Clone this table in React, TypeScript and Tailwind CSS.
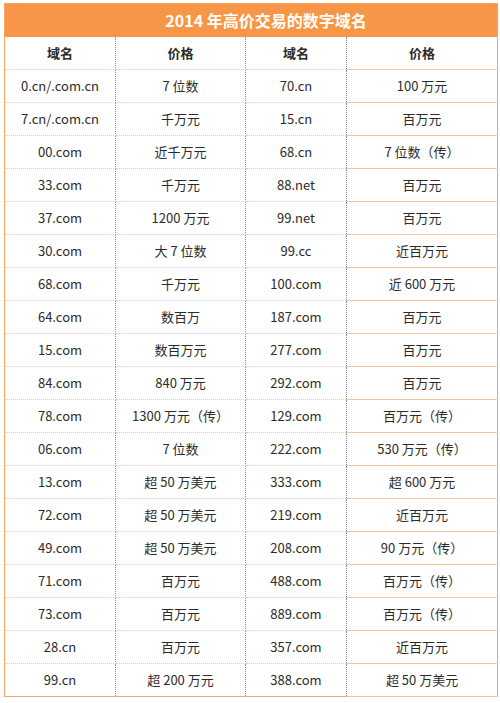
const rows: [string, string, string, string][] = [
  ["0.cn/.com.cn", "7 位数", "70.cn", "100 万元"],
  ["7.cn/.com.cn", "千万元", "15.cn", "百万元"],
  ["00.com", "近千万元", "68.cn", "7 位数（传）"],
  ["33.com", "千万元", "88.net", "百万元"],
  ["37.com", "1200 万元", "99.net", "百万元"],
  ["30.com", "大 7 位数", "99.cc", "近百万元"],
  ["68.com", "千万元", "100.com", "近 600 万元"],
  ["64.com", "数百万", "187.com", "百万元"],
  ["15.com", "数百万元", "277.com", "百万元"],
  ["84.com", "840 万元", "292.com", "百万元"],
  ["78.com", "1300 万元（传）", "129.com", "百万元（传）"],
  ["06.com", "7 位数", "222.com", "530 万元（传）"],
  ["13.com", "超 50 万美元", "333.com", "超 600 万元"],
  ["72.com", "超 50 万美元", "219.com", "近百万元"],
  ["49.com", "超 50 万美元", "208.com", "90 万元（传）"],
  ["71.com", "百万元", "488.com", "百万元（传）"],
  ["73.com", "百万元", "889.com", "百万元（传）"],
  ["28.cn", "百万元", "357.com", "近百万元"],
  ["99.cn", "超 200 万元", "388.com", "超 50 万美元"],
];

const cell = "h-[33px] p-0 text-center align-middle border-b border-[#f9c49b]";
const dotted = "border-r border-r-[#8a8a8a] border-dotted";

export default function App() {
  return (
    <div className="w-[500px] h-[703px] bg-white pt-[3px] pl-[4px] font-['Noto_Sans_CJK_SC','Noto_Sans',sans-serif] text-[13px] text-[#2b2b2b]">
      <table className="w-[493px] border-collapse border border-[#f7a464] table-fixed">
        <colgroup>
          <col className="w-[111px]" />
          <col className="w-[130px]" />
          <col className="w-[101px]" />
          <col className="w-[151px]" />
        </colgroup>
        <thead>
          <tr>
            <th colSpan={4} className="h-[33px] p-0 pl-[30px] bg-[#f79646] text-white text-[16px] font-bold text-center">
              2014 年高价交易的数字域名
            </th>
          </tr>
          <tr className="font-bold">
            <th className={`${cell} ${dotted} font-bold`}>域名</th>
            <th className={`${cell} ${dotted} font-bold`}>价格</th>
            <th className={`${cell} ${dotted} font-bold`}>域名</th>
            <th className={`${cell} font-bold`}>价格</th>
          </tr>
        </thead>
        <tbody>
          {rows.map((r, i) => (
            <tr key={i}>
              <td className={`${cell} ${dotted}`}>{r[0]}</td>
              <td className={`${cell} ${dotted}`}>{r[1]}</td>
              <td className={`${cell} ${dotted}`}>{r[2]}</td>
              <td className={cell}>{r[3]}</td>
            </tr>
          ))}
        </tbody>
      </table>
    </div>
  );
}
